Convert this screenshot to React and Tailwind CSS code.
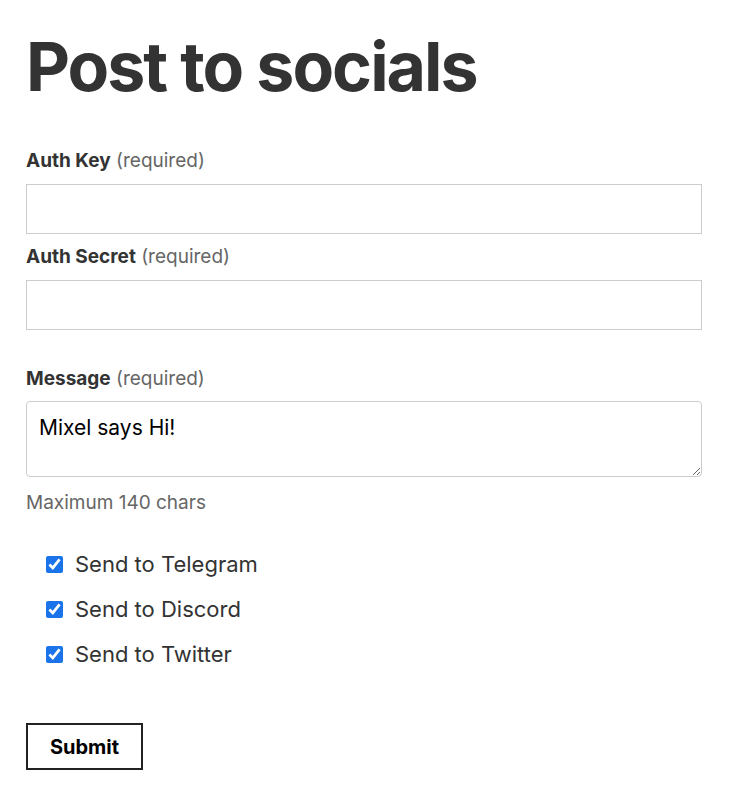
import { useState } from "react";

const Label = ({ name }) => (
  <label className="block text-[19px] leading-[24px] text-[#333]">
    <span className="font-bold">{name}</span>{" "}
    <span className="text-[#666]">(required)</span>
  </label>
);

export default function App() {
  const [message, setMessage] = useState("Mixel says Hi!");
  const [checks, setChecks] = useState({ telegram: true, discord: true, twitter: true });

  const toggle = (k) => setChecks({ ...checks, [k]: !checks[k] });

  return (
    <div className="bg-white min-h-[800px] px-[26px] pt-[22px] font-['Inter',sans-serif] text-[#333]">
      <h1 className="text-[68px] leading-[88px] font-bold tracking-[-2px] text-[#333]">
        Post to socials
      </h1>

      <form className="w-[676px] mt-[39px]" onSubmit={(e) => e.preventDefault()}>
        <Label name="Auth Key" />
        <input
          type="text"
          className="block w-full h-[50px] mt-[11px] border border-[#ccc] bg-white px-3 outline-none"
        />

        <div className="mt-[11px]">
          <Label name="Auth Secret" />
        </div>
        <input
          type="text"
          className="block w-full h-[50px] mt-[11px] border border-[#ccc] bg-white px-3 outline-none"
        />

        <div className="mt-[37px]">
          <Label name="Message" />
        </div>
        <textarea
          value={message}
          onChange={(e) => setMessage(e.target.value)}
          className="block w-full h-[76px] mt-[10px] border border-[#ccc] rounded-[4px] bg-white px-[12px] pt-[13px] pb-[8px] text-[21px] leading-[26px] text-black outline-none resize-y"
        />
        <p className="mt-[14px] text-[19px] leading-[24px] text-[#666]">Maximum 140 chars</p>

        <div className="mt-[37px] pl-[20px] flex flex-col gap-[21px]">
          {[
            ["telegram", "Send to Telegram"],
            ["discord", "Send to Discord"],
            ["twitter", "Send to Twitter"],
          ].map(([k, text]) => (
            <label key={k} className="flex items-center gap-[12px] text-[22px] leading-[24px] text-[#333]">
              <input
                type="checkbox"
                checked={checks[k]}
                onChange={() => toggle(k)}
                className="w-[17px] h-[17px] m-0 accent-[#1a73e8]"
              />
              {text}
            </label>
          ))}
        </div>

        <button
          type="submit"
          className="mt-[57px] w-[117px] h-[47px] border-2 border-[#222] bg-white text-[20px] font-bold text-black"
        >
          Submit
        </button>
      </form>
    </div>
  );
}
